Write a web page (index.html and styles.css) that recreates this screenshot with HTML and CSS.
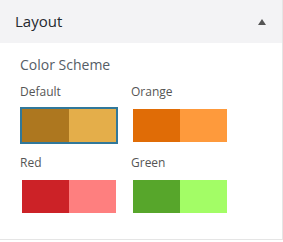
FILE: index.html
```html
<!DOCTYPE html>
<html lang="en">
<head>
  <meta charset="UTF-8" />
  <meta name="viewport" content="width=device-width, initial-scale=1.0" />
  <title>Layout</title>
  <link rel="stylesheet" href="styles.css">
</head>
<body>
  <div class="panel">
    <div class="panel-head">
      <h3>Layout</h3>
      <span class="toggle"></span>
    </div>
    <div class="panel-body">
      <div class="field-title">Color Scheme</div>
      <div class="schemes">
        <div class="scheme">
          <div class="scheme-name">Default</div>
          <div class="swatch selected">
            <span style="background: #ad771f"></span>
            <span style="background: #e4ae4a"></span>
          </div>
        </div>
        <div class="scheme">
          <div class="scheme-name">Orange</div>
          <div class="swatch">
            <span style="background: #e06c06"></span>
            <span style="background: #fe9a3c"></span>
          </div>
        </div>
        <div class="scheme">
          <div class="scheme-name">Red</div>
          <div class="swatch">
            <span style="background: #cc2227"></span>
            <span style="background: #fe7f7f"></span>
          </div>
        </div>
        <div class="scheme">
          <div class="scheme-name">Green</div>
          <div class="swatch">
            <span style="background: #57a62b"></span>
            <span style="background: #a3fd66"></span>
          </div>
        </div>
      </div>
    </div>
  </div>
</body>
</html>
```

FILE: styles.css
```css
body {
  margin: 0;
  font-family: 'Open Sans', 'Noto Sans', sans-serif;
  background: #fff;
}
.panel {
  width: 282px;
  height: 239px;
  border-right: 1px solid #e5e5e5;
  border-bottom: 1px solid #e5e5e5;
  background: #fff;
}
.panel-head {
  height: 43px;
  background: #f3f3f5;
  display: flex;
  align-items: center;
  justify-content: space-between;
  padding: 0 16px 0 15px;
}
.panel-head h3 {
  margin: 0;
  font-size: 15px;
  font-weight: normal;
  line-height: 43px;
  color: #23282d;
}
.toggle {
  width: 0;
  height: 0;
  border-left: 4px solid transparent;
  border-right: 4px solid transparent;
  border-bottom: 6px solid #555;
  margin-top: 1px;
}
.panel-body {
  padding: 12px 20px 0;
}
.field-title {
  font-size: 14px;
  line-height: 20px;
  color: #555d66;
  margin-bottom: 9px;
}
.schemes {
  display: grid;
  grid-template-columns: 98px 98px;
  column-gap: 13px;
  row-gap: 11px;
}
.scheme-name {
  font-size: 12px;
  line-height: 16px;
  color: #555;
  margin-bottom: 7px;
}
.swatch {
  display: flex;
  border: 2px solid transparent;
}
.swatch.selected {
  border-color: #31789a;
}
.swatch span {
  width: 47px;
  height: 33px;
}
```
